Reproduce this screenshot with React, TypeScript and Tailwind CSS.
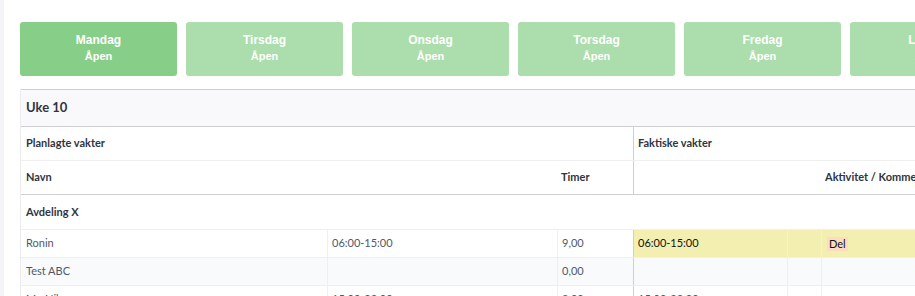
const days = ["Mandag", "Tirsdag", "Onsdag", "Torsdag", "Fredag", "Lørdag", "Søndag"];

const rows = [
  { name: "Ronin", planned: "06:00-15:00", hours: "9,00", actual: "06:00-15:00", activity: "Del", highlight: true },
  { name: "Test ABC", planned: "", hours: "0,00", actual: "", activity: "", highlight: false },
  { name: "Mr. Nilsen", planned: "15:00-23:00", hours: "8,00", actual: "15:00-23:00", activity: "", highlight: false },
];

const cols = "grid grid-cols-[306px_230px_76px_154px_34px_1fr]";

export default function App() {
  return (
    <div className="w-[915px] h-[296px] overflow-hidden bg-white flex">
      <div className="w-[4px] shrink-0 bg-[#f4f4f8]" />
      <div className="pl-4 pt-[22px] flex flex-col shrink-0">
        {/* Day tabs */}
        <div className="flex gap-[9px] font-['Liberation_Sans',Arial,sans-serif]">
          {days.map((d, i) => (
            <div
              key={d}
              className={`w-[157px] h-[54px] shrink-0 rounded-[3px] flex flex-col items-center pt-[11px] gap-[3px] text-white font-bold ${
                i === 0 ? "bg-[#87cf89]" : "bg-[#abdeac]"
              }`}
            >
              <span className="text-[12px] leading-[14px]">{d}</span>
              <span className="text-[11px] leading-[13px]">Åpen</span>
            </div>
          ))}
        </div>

        {/* Week table */}
        <div className="mt-[13px] w-[1000px] border-l border-l-[#ececef] font-['Lato',sans-serif] text-[11px]">
          <div className="h-[38px] flex items-center pl-[5px] bg-[#f9f9fb] border-t border-b border-[#cfcfd3]">
            <span className="text-[13px] font-bold text-[#2f3540]">Uke 10</span>
          </div>

          <div className="flex h-[34px] border-b border-[#efeff1] font-bold text-[#2f3540]">
            <div className="w-[612px] flex items-center pl-[5px]">Planlagte vakter</div>
            <div className="flex-1 flex items-center pl-[4px] border-l border-[#cfcfd3]">Faktiske vakter</div>
          </div>

          <div className={`${cols} h-[34px] border-b border-[#cfcfd3] font-bold text-[#2f3540]`}>
            <div className="flex items-center pl-[5px]">Navn</div>
            <div />
            <div className="flex items-center pl-[4px]">Timer</div>
            <div className="border-l border-[#cfcfd3]" />
            <div />
            <div className="flex items-center pl-[4px]">Aktivitet / Kommentar</div>
          </div>

          <div className="h-[35px] flex items-center pl-[5px] border-b border-[#efeff1] font-bold text-[#2f3540]">
            Avdeling X
          </div>

          {rows.map((r, i) => (
            <div
              key={r.name}
              className={`${cols} h-[28px] border-b border-[#efeff1] ${i % 2 === 1 ? "bg-[#f9fafc]" : "bg-white"} text-[#505868]`}
            >
              <div className="flex items-center pl-[5px]">{r.name}</div>
              <div className="flex items-center pl-[4px] border-l border-[#efeff1]">{r.planned}</div>
              <div className="flex items-center pl-[4px] border-l border-[#efeff1]">{r.hours}</div>
              <div
                className={`flex items-center pl-[4px] border-l border-[#cfcfd3] ${
                  r.highlight ? "bg-[#f3efb0] text-[#111]" : ""
                }`}
              >
                {r.actual}
              </div>
              <div className={`border-l border-[#efeff1] ${r.highlight ? "bg-[#f3efb0]" : ""}`} />
              <div className={`flex items-center pl-[5px] border-l border-[#efeff1] ${r.highlight ? "bg-[#f3efb0]" : ""}`}>
                {r.activity && (
                  <span className="bg-[#fcdcc2] px-[2px] leading-[14px] text-[#111]">{r.activity}</span>
                )}
              </div>
            </div>
          ))}
        </div>
      </div>
    </div>
  );
}
